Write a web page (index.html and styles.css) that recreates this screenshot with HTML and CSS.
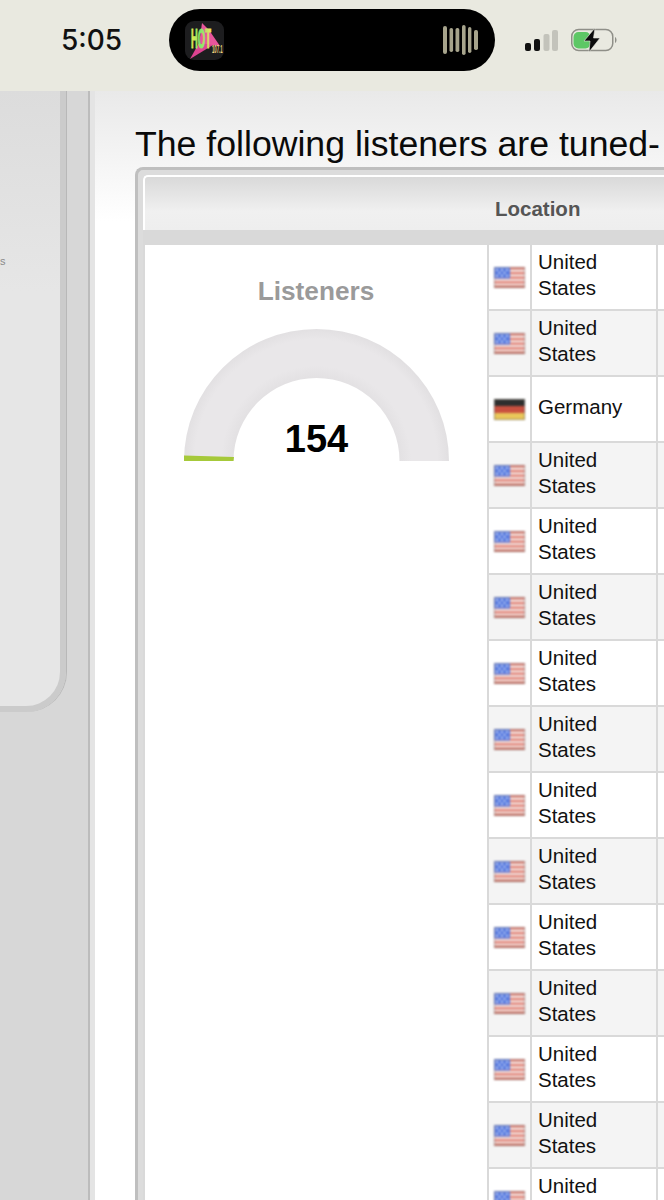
FILE: index.html
```html
<!DOCTYPE html>
<html lang="en">
<head>
<meta charset="utf-8">
<title>Listeners</title>
<link rel="stylesheet" href="styles.css">
</head>
<body>
<svg class="defs" width="0" height="0" aria-hidden="true">
  <defs>
    <linearGradient id="hot" x1="0" y1="0" x2="1" y2="0">
      <stop offset="0" stop-color="#f0e84e"/><stop offset=".45" stop-color="#7ee86c"/><stop offset="1" stop-color="#f4e25e"/>
    </linearGradient>
    <radialGradient id="track" gradientUnits="userSpaceOnUse" cx="132" cy="132" r="132">
      <stop offset=".63" stop-color="#e3e1e3"/><stop offset=".72" stop-color="#e9e7e9"/><stop offset=".92" stop-color="#e9e7e9"/><stop offset="1" stop-color="#e2e0e2"/>
    </radialGradient>
    <symbol id="us" viewBox="0 0 31 21">
      <rect width="31" height="21" fill="#f3e4e0"/>
      <rect y="0" width="31" height="2.5" fill="#d9776a"/>
      <rect y="5" width="31" height="2.2" fill="#e07c70"/>
      <rect y="9.6" width="31" height="2.2" fill="#e07c70"/>
      <rect y="14.2" width="31" height="2.2" fill="#e07c70"/>
      <rect y="18.6" width="31" height="2.4" fill="#c9685a"/>
      <rect width="16" height="11.5" fill="#5a7ce0"/>
      <g fill="#cfdcf8">
        <rect x="2" y="2" width="2" height="1.6"/><rect x="7" y="2" width="2" height="1.6"/><rect x="12" y="2" width="2" height="1.6"/>
        <rect x="4.5" y="5" width="2" height="1.6"/><rect x="9.5" y="5" width="2" height="1.6"/>
        <rect x="2" y="8" width="2" height="1.6"/><rect x="7" y="8" width="2" height="1.6"/><rect x="12" y="8" width="2" height="1.6"/>
      </g>
      <rect x=".5" y=".5" width="30" height="20" fill="none" stroke="#8a7f80" stroke-opacity=".55"/>
    </symbol>
    <symbol id="de" viewBox="0 0 31 21">
      <rect width="31" height="7" fill="#2e2e2e"/>
      <rect y="7" width="31" height="7" fill="#c9503f"/>
      <rect y="14" width="31" height="7" fill="#e9c65a"/>
      <rect x=".5" y=".5" width="30" height="20" fill="none" stroke="#6f6a60" stroke-opacity=".6"/>
    </symbol>
  </defs>
</svg>

<header class="status">
  <div class="time">5:05</div>
  <div class="island">
    <svg class="app-logo" viewBox="0 0 39 39" role="img" aria-label="Hot 107.1">
      <rect width="39" height="39" rx="9" fill="#1d1d1f"/>
      <path d="M17 2 L24 9 L35 25 L14 23 Z" fill="#e8559b"/>
      <path d="M14 22 L28 24 L5 38Z" fill="#dd4391"/>
      <text class="logo-hot" transform="translate(6 27) scale(.35 1)" fill="url(#hot)" stroke="url(#hot)" stroke-width="1">HOT</text>
      <text class="logo-num" transform="translate(27 32) scale(.42 1)" fill="#edd27a">107.1</text>
    </svg>
    <svg class="wave" viewBox="0 0 36 30" aria-hidden="true">
      <g fill="#a7a48c">
        <rect x="0" y="1" width="4" height="28" rx="2"/>
        <rect x="6.500" y="3" width="3.600" height="24" rx="1.700"/>
        <rect x="12.500" y="3" width="3.800" height="24" rx="1.700"/>
        <rect x="19" y="0" width="3.600" height="30" rx="1.800"/>
        <rect x="25" y="2" width="3.400" height="26" rx="1.700"/>
        <rect x="31" y="5" width="4" height="20" rx="1.700"/>
      </g>
    </svg>
  </div>
  <svg class="signal" viewBox="0 0 34 22" aria-hidden="true">
    <rect x="0" y="13" width="6" height="8" rx="2" fill="#111"/>
    <rect x="9" y="9" width="6" height="12" rx="2" fill="#111"/>
    <rect x="18.500" y="4" width="6" height="17" rx="2" fill="#c3c3bb"/>
    <rect x="27" y="0" width="6" height="21" rx="2" fill="#c3c3bb"/>
  </svg>
  <svg class="battery" viewBox="0 0 48 24" aria-hidden="true">
    <rect x=".750" y="1.500" width="41" height="21" rx="7" fill="none" stroke="#8f8f88" stroke-width="1.500"/>
    <rect x="2.500" y="4" width="17" height="16.500" rx="5" fill="#5dc765"/>
    <path d="M44 9 c2 .8 2 5.200 0 6Z" fill="#8f8f88"/>
    <path d="M24 0 L13 13 H19 L18 24 L29 10 H22.500Z" fill="#0c0c0c" stroke="#e9e9e0" stroke-width=".6"/>
  </svg>
</header>

<div class="page">
  <aside class="sidebar"><div class="side-panel"><span class="side-mark">s</span></div></aside>
  <main class="main">
    <h1 class="title">The following listeners are tuned-</h1>
    <section class="card">
      <div class="head">
        <div class="head-blank"></div>
        <div class="head-label">Location</div>
      </div>
      <div class="strip"></div>
      <div class="body">
        <div class="gauge-cell">
          <div class="gauge-title">Listeners</div>
          <svg class="gauge" viewBox="0 0 265 134" role="img" aria-label="154 listeners">
            <path d="M0 132 A132.500 132 0 0 1 265 132 H215.500 A83 83 0 0 0 49.500 132Z" fill="url(#track)"/>
            <path d="M0 126.500 L50 128 L49.500 132 H0Z" fill="#a6c93a"/>
            <text class="gauge-value" x="132.500" y="123" text-anchor="middle">154</text>
          </svg>
        </div>
        <div class="rows">
          <div class="row"><div class="flag"><svg class="flag-img"><use href="#us"/></svg></div><div class="loc">United States</div><div class="rest"></div></div>
          <div class="row alt"><div class="flag"><svg class="flag-img"><use href="#us"/></svg></div><div class="loc">United States</div><div class="rest"></div></div>
          <div class="row"><div class="flag"><svg class="flag-img"><use href="#de"/></svg></div><div class="loc">Germany</div><div class="rest"></div></div>
          <div class="row alt"><div class="flag"><svg class="flag-img"><use href="#us"/></svg></div><div class="loc">United States</div><div class="rest"></div></div>
          <div class="row"><div class="flag"><svg class="flag-img"><use href="#us"/></svg></div><div class="loc">United States</div><div class="rest"></div></div>
          <div class="row alt"><div class="flag"><svg class="flag-img"><use href="#us"/></svg></div><div class="loc">United States</div><div class="rest"></div></div>
          <div class="row"><div class="flag"><svg class="flag-img"><use href="#us"/></svg></div><div class="loc">United States</div><div class="rest"></div></div>
          <div class="row alt"><div class="flag"><svg class="flag-img"><use href="#us"/></svg></div><div class="loc">United States</div><div class="rest"></div></div>
          <div class="row"><div class="flag"><svg class="flag-img"><use href="#us"/></svg></div><div class="loc">United States</div><div class="rest"></div></div>
          <div class="row alt"><div class="flag"><svg class="flag-img"><use href="#us"/></svg></div><div class="loc">United States</div><div class="rest"></div></div>
          <div class="row"><div class="flag"><svg class="flag-img"><use href="#us"/></svg></div><div class="loc">United States</div><div class="rest"></div></div>
          <div class="row alt"><div class="flag"><svg class="flag-img"><use href="#us"/></svg></div><div class="loc">United States</div><div class="rest"></div></div>
          <div class="row"><div class="flag"><svg class="flag-img"><use href="#us"/></svg></div><div class="loc">United States</div><div class="rest"></div></div>
          <div class="row alt"><div class="flag"><svg class="flag-img"><use href="#us"/></svg></div><div class="loc">United States</div><div class="rest"></div></div>
          <div class="row last"><div class="flag"><svg class="flag-img"><use href="#us"/></svg></div><div class="loc">United</div><div class="rest"></div></div>
        </div>
      </div>
    </section>
  </main>
</div>
</body>
</html>
```
FILE: styles.css
```css
* { box-sizing: border-box; }
html, body { margin: 0; padding: 0; }
body {
  width: 664px;
  height: 1200px;
  overflow: hidden;
  background: #d7d7d7;
  font-family: "Liberation Sans", Arial, sans-serif;
  color: #000;
}
.defs { display: block; height: 0; }

/* status bar */
.status {
  height: 91px;
  background: #e9e9e0;
  display: flex;
  align-items: center;
  padding: 0 0 11px 61px;
}
.time {
  width: 108px;
  font-family: Inter, "Liberation Sans", sans-serif;
  font-size: 28px;
  font-weight: 500;
  line-height: 34px;
  color: #111;
}
.island {
  width: 326px;
  height: 62px;
  border-radius: 31px;
  background: #000;
  display: flex;
  align-items: center;
  justify-content: space-between;
  padding: 0 16px;
}
.app-logo { width: 39px; height: 39px; }
.logo-hot { font: bold 27px "Liberation Sans", sans-serif; }
.logo-num { font: bold 10px "Liberation Sans", sans-serif; }
.wave { width: 36px; height: 30px; }
.signal { width: 34px; height: 22px; margin: 1px 0 0 30px; }
.battery { width: 48px; height: 24px; margin: 0 0 0 12px; overflow: visible; }

/* page */
.page { display: flex; height: 1109px; }
.sidebar { width: 88px; flex: none; }
.side-panel {
  width: 66px;
  height: 621px;
  padding-top: 162px;
  background: linear-gradient(#dcdcdc, #e6e6e6 200px);
  border-right: 6px solid #cbcbcb;
  border-bottom: 6px solid #cbcbcb;
  border-bottom-right-radius: 40px;
  box-shadow: 1px 0 0 #b8b8b8;
}
.side-mark {
  display: block;
  font-size: 11px;
  line-height: 16px;
  color: #8a8a8a;
}
.main {
  flex: 1;
  min-width: 0;
  padding: 34px 0 0 45px;
  border-left: 2px solid #bcbcbc;
  box-shadow: inset 5px 0 0 #e4e4e4;
  background: linear-gradient(#e9e9e9, #fff 130px);
  overflow: hidden;
}
.title {
  margin: 0 0 3px;
  font-size: 35.65px;
  font-weight: 400;
  line-height: 39px;
  white-space: nowrap;
  color: #0a0a0a;
}

/* card */
.card {
  width: 700px;
  height: 1100px;
  background: #dcdcdc;
  border: 3px solid #bfbfbf;
  border-right: 0;
  border-bottom: 0;
  border-top-left-radius: 8px;
  padding: 5px 0 0 5px;
}
.head {
  display: flex;
  height: 55px;
  background: linear-gradient(#d9d9d9, #f0f0f0 65%, #eee);
  border-top: 2px solid #fff;
  border-left: 2px solid #fff;
  border-top-left-radius: 5px;
}
.head-blank { width: 350px; flex: none; }
.head-label {
  font-size: 20.5px;
  font-weight: bold;
  color: #555;
  line-height: 64px;
  height: 53px;
}
.strip { height: 15px; background: #d9d9d9; }
.body { display: flex; background: #d9d9d9; padding-left: 2px; }
.gauge-cell {
  width: 342px;
  flex: none;
  height: 1000px;
  background: #fff;
  padding-top: 30px;
  display: flex;
  flex-direction: column;
  align-items: center;
}
.gauge-title {
  font-size: 26.2px;
  font-weight: bold;
  line-height: 32px;
  color: #9a9a9a;
}
.gauge { width: 265px; height: 134px; margin: 22px 0 0 1px; }
.gauge-value { font: bold 38px "Liberation Sans", sans-serif; fill: #000; }

.rows { flex: 1; padding-left: 2px; }
.row {
  height: 66px;
  display: flex;
  border-bottom: 2px solid #d9d9d9;
  background: #fff;
}
.row.alt { background: #f4f4f4; }
.flag {
  width: 41px;
  flex: none;
  display: flex;
  align-items: center;
  justify-content: center;
}
.flag-img { width: 31px; height: 21px; display: block; filter: blur(.8px); }
.loc {
  width: 128px;
  flex: none;
  border-left: 2px solid #d9d9d9;
  border-right: 2px solid #d9d9d9;
  padding: 0 30px 4px 6px;
  display: flex;
  align-items: center;
  font-size: 20.5px;
  line-height: 26px;
  color: #111;
}
.row.last .loc { align-items: flex-start; padding-top: 4px; }
.rest { flex: 1; }
```
